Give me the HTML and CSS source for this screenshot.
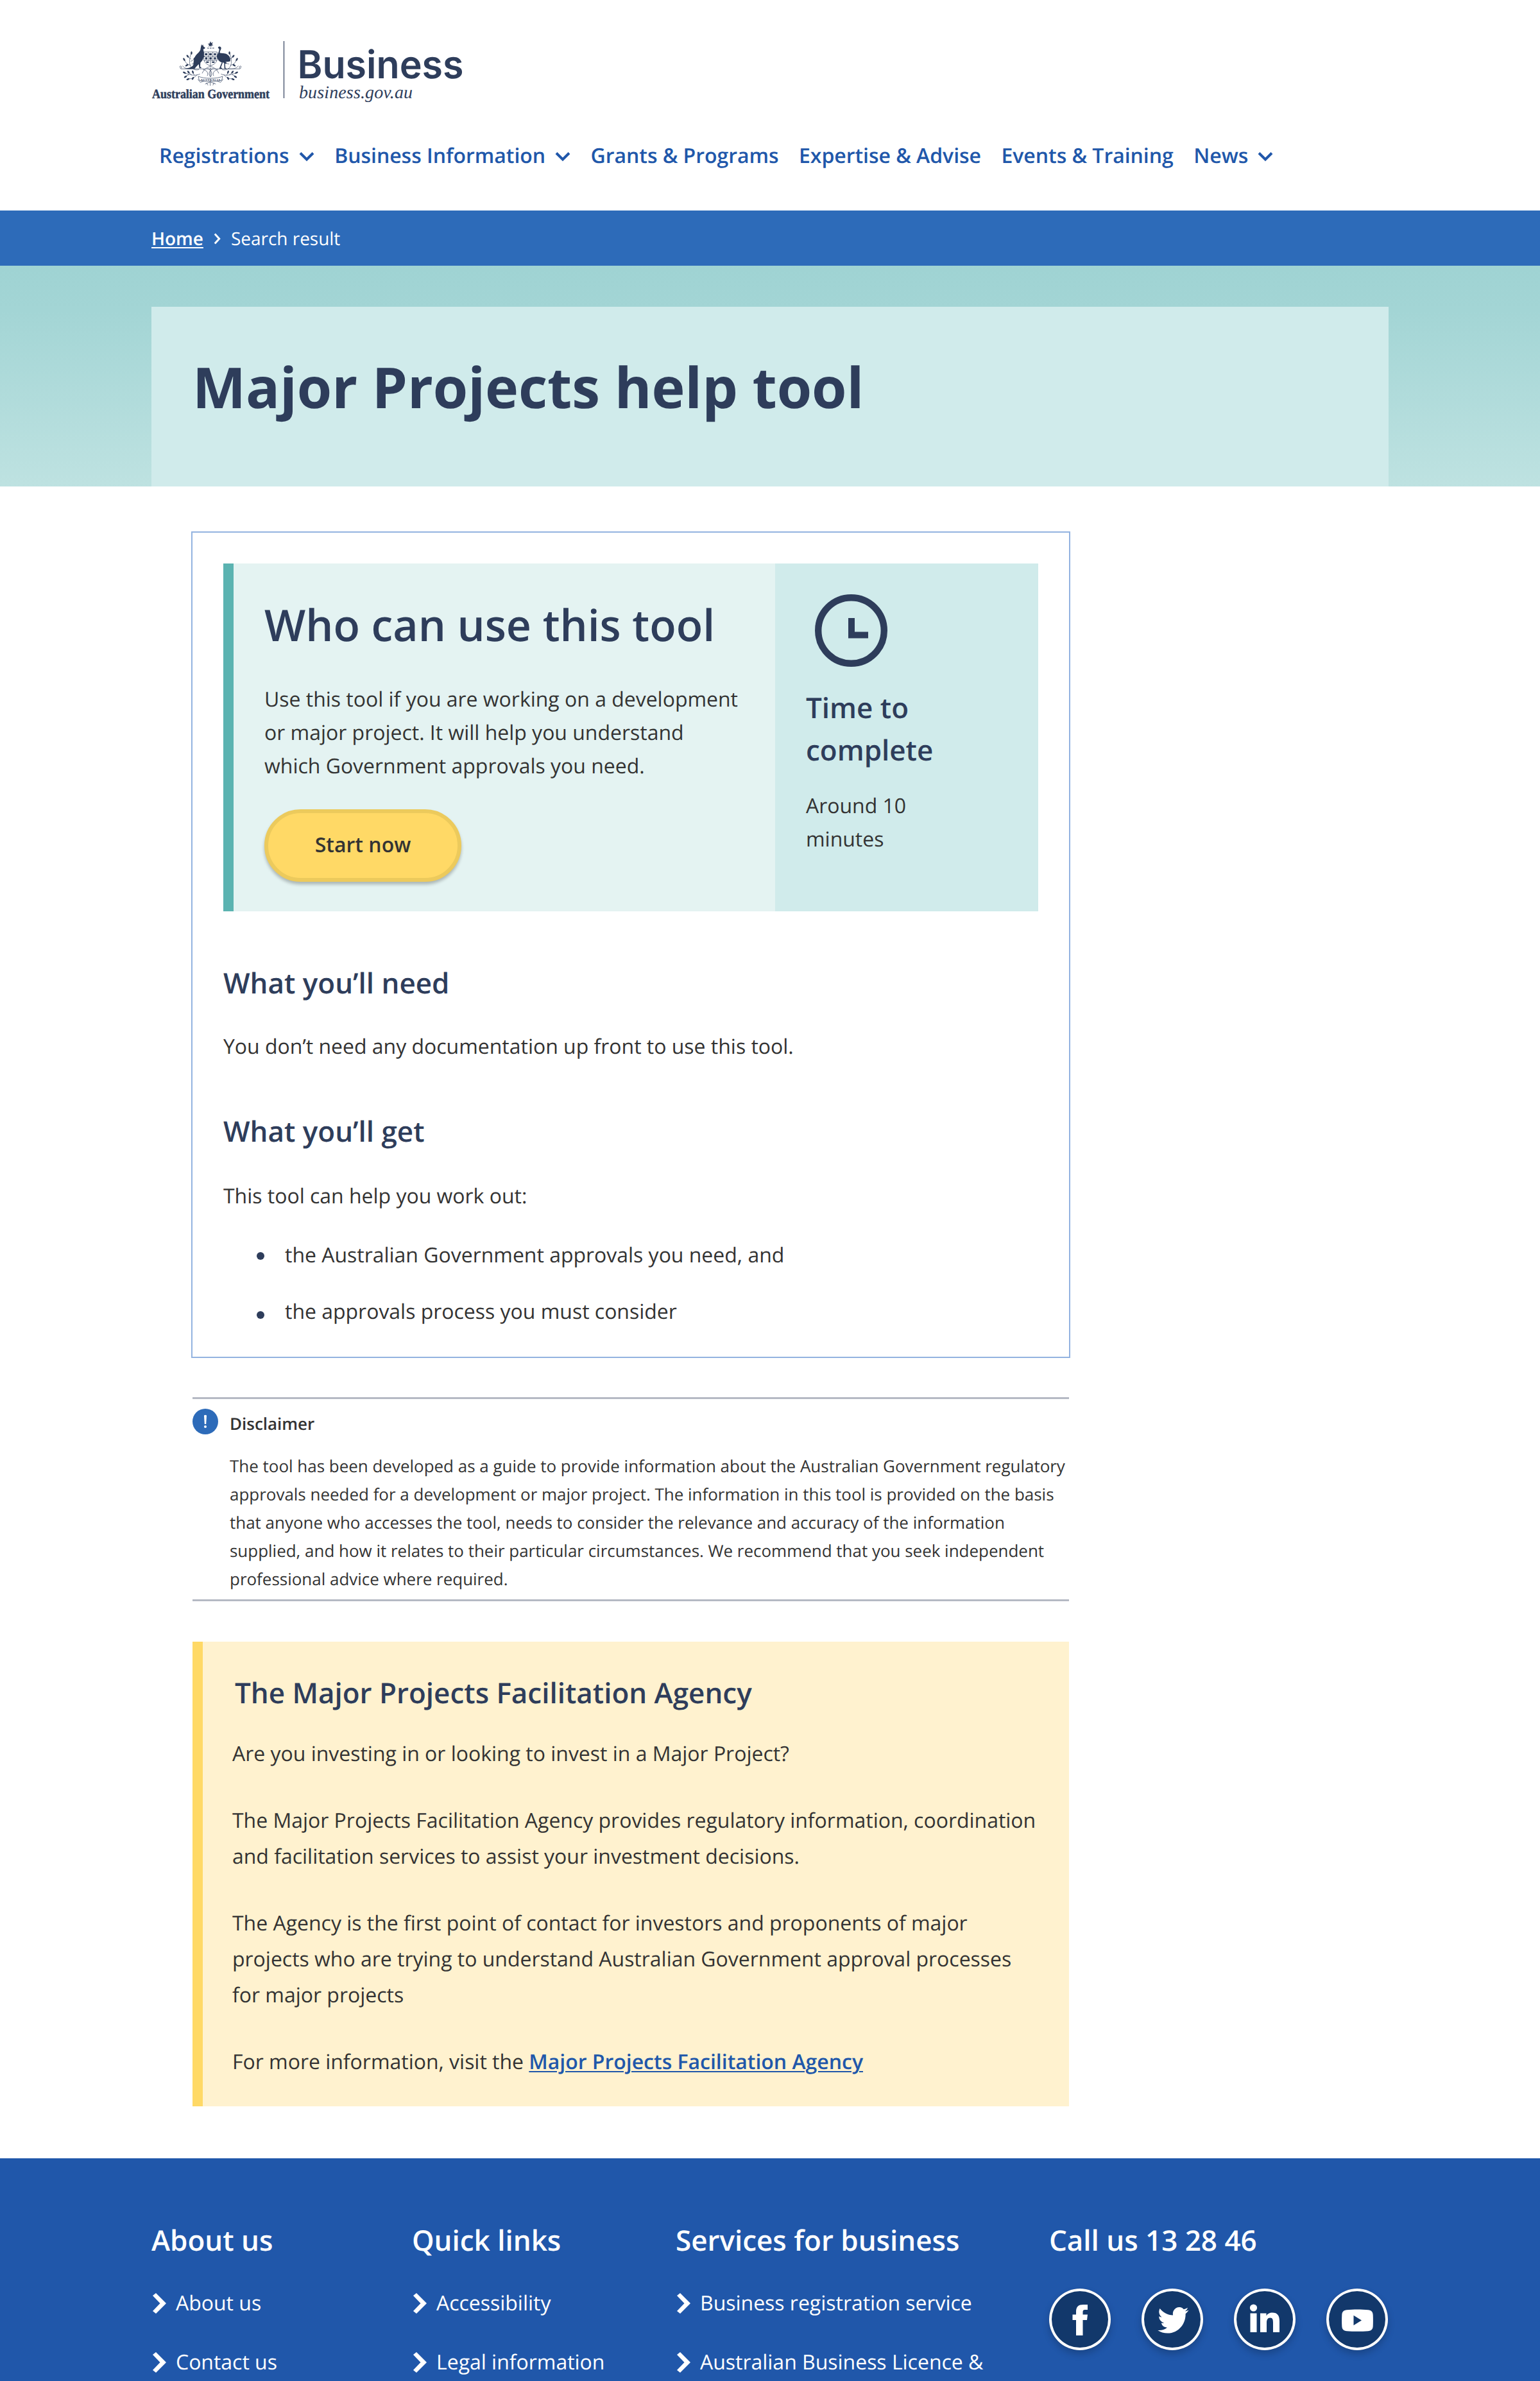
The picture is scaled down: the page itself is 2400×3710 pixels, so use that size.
FILE: index.html
```html
<!DOCTYPE html>
<html lang="en">
<head>
<meta charset="utf-8">
<title>Major Projects help tool</title>
<link rel="stylesheet" href="styles.css">
</head>
<body>
<svg width="0" height="0" class="defs" aria-hidden="true">
  <symbol id="down" viewBox="0 0 24 16"><path d="M2 2.5 12 12.5 22 2.5" fill="none" stroke="currentColor" stroke-width="4"/></symbol>
  <symbol id="right" viewBox="0 0 22 32"><path d="M0 4 5 0 21 16 5 32 0 28 11.500 16Z" fill="currentColor"/></symbol>
  <symbol id="sprig" viewBox="0 0 76 100" overflow="visible">
    <g fill="none" stroke="currentColor" stroke-width="1.500">
      <path d="M66 66C50 70 38 62 34 50S32 22 38 6M36 50C24 48 18 42 14 32M44 62C28 66 14 62 6 52M38 28 26 20M36 36 50 28M40 46 54 42"/>
      <path d="M70 82C52 90 36 86 14 78M60 84C50 96 40 100 26 100M40 86 30 78M30 84 18 90M50 87 44 78"/>
    </g>
    <g fill="currentColor">
      <ellipse cx="39" cy="5" rx="3" ry="6"/><ellipse cx="25" cy="17" rx="3" ry="6" transform="rotate(-40 25 17)"/><ellipse cx="51" cy="25" rx="3" ry="6" transform="rotate(45 51 25)"/><ellipse cx="12" cy="29" rx="3" ry="6" transform="rotate(-30 12 29)"/><ellipse cx="55" cy="41" rx="3" ry="6" transform="rotate(70 55 41)"/><ellipse cx="22" cy="50" rx="3" ry="6" transform="rotate(60 22 50)"/><ellipse cx="13" cy="77" rx="3" ry="6" transform="rotate(-60 13 77)"/><ellipse cx="28" cy="75" rx="3" ry="6" transform="rotate(-40 28 75)"/><ellipse cx="44" cy="75" rx="3" ry="6" transform="rotate(-20 44 75)"/><ellipse cx="17" cy="92" rx="3" ry="6" transform="rotate(60 17 92)"/><ellipse cx="26" cy="101" rx="3" ry="6" transform="rotate(70 26 101)"/><ellipse cx="44" cy="98" rx="3" ry="6" transform="rotate(30 44 98)"/>
    </g>
  </symbol>
</svg>

<header class="header">
  <svg class="logo" width="500" height="110" viewBox="0 0 500 110" role="img" aria-label="Australian Government, Business">
    <g transform="translate(-11 5) scale(.33333)" color="#2e3d5b">
      <path fill="currentColor" d="M309 28 312 36 321 33 316 41 322 47 314 47 312 55 308 49 300 53 303 45 296 40 304 39Z"/>
      <path stroke="currentColor" stroke-width="3" d="M294 60h8m4 0h8m4 0h8"/>
      <path fill="currentColor" d="M267 41 270 49 274 43 276 52 284 58 282 63 275 65C278 75 280 86 278 95L284 98 277 102C276 113 268 122 262 128L261 146 268 153 257 154 254 135C247 142 240 148 236 156H186C208 153 224 149 229 137 231 118 232 101 246 88 258 78 263 70 263 61Z"/>
      <path fill="currentColor" d="M344 58C346 50 358 51 359 59 360 66 352 72 353 82 362 86 375 82 388 90 399 97 403 108 402 119 392 126 385 122 377 126L379 152 386 156H374L373 129 367 126 358 150 366 156H350L362 127C350 124 341 112 339 99 340 88 350 78 350 65Z"/>
      <g fill="none" stroke="currentColor" stroke-width="2">
        <path d="M278 78H340V111C340 128 322 138 309 143 296 138 278 128 278 111ZM278 98H340M278 118H339M299 78V118M320 78V118M309 118V142"/>
        <path d="M167 150C162 142 174 141 174 150 172 157 166 157 168 150M171 157H447M451 150C456 142 444 141 444 150 446 157 452 157 450 150"/>
        <path d="M309 145C294 150 280 156 270 178M309 145C324 150 338 156 348 178M309 150V195M295 155C315 164 321 180 309 194 297 180 303 164 323 155M274 160C294 164 300 178 294 190M344 160C324 164 318 178 324 190"/>
        <path d="M252 192C280 204 338 204 366 192L362 210C338 218 280 218 256 210ZM250 206 262 220 278 214M368 206 356 220 340 214M308 218 284 228M308 218 334 228M308 214V236M290 222 298 234M326 222 320 234"/>
      </g>
      <g fill="currentColor"><path d="M283 84h11v9h-11zM303 84h12v9h-12zM325 84h10v9h-10zM284 103h10v10h-10zM304 103h11v10h-11zM325 103h10v10h-10zM289 122h12v7h-12zM316 122h12v7h-12z"/></g>
      <text x="309" y="212" font-family="Liberation Serif" font-weight="700" font-size="14" text-anchor="middle" textLength="92" fill="currentColor">AUSTRALIA</text>
      <use href="#sprig" x="170" y="76" width="98" height="128"/>
      <use href="#sprig" x="170" y="76" width="98" height="128" transform="matrix(-1 0 0 1 618 0)"/>
    </g>
    <text x="1" y="103" class="logo-gov" textLength="183" lengthAdjust="spacingAndGlyphs">Australian Government</text>
    <path d="M206.500 14V103" stroke="#2e3d5b" stroke-width="1.200"/>
    <text x="227.500" y="72" class="logo-name" textLength="259" lengthAdjust="spacingAndGlyphs">Business</text>
    <text x="230" y="103" class="logo-url" textLength="177">business.gov.au</text>
  </svg>
  <nav class="nav">
    <a>Registrations<svg class="down"><use href="#down"/></svg></a>
    <a>Business Information<svg class="down"><use href="#down"/></svg></a>
    <a>Grants &amp; Programs</a>
    <a>Expertise &amp; Advise</a>
    <a>Events &amp; Training</a>
    <a>News<svg class="down"><use href="#down"/></svg></a>
  </nav>
</header>

<div class="crumbs">
  <a class="home">Home</a>
  <svg width="11" height="18" viewBox="0 0 10 17"><path d="M1.500 1.500 8 8.500 1.500 15.500" fill="none" stroke="#fff" stroke-width="2.800"/></svg>
  <span>Search result</span>
</div>

<div class="hero"><div class="hero-box"><h1>Major Projects help tool</h1></div></div>

<main class="main">
  <section class="card">
    <div class="intro">
      <div class="who">
        <h2>Who can use this tool</h2>
        <p>Use this tool if you are working on a development<br>or major project. It will help you understand<br>which Government approvals you need.</p>
        <button class="start">Start now</button>
      </div>
      <div class="time">
        <svg class="clock" viewBox="0 0 113 113"><circle cx="56.500" cy="56.500" r="51.300" fill="none" stroke="#2e3d5b" stroke-width="10.400"/><path d="M52 37H62V58.500H83V68.500H52Z" fill="#2e3d5b"/></svg>
        <h3>Time to<br>complete</h3>
        <p>Around 10<br>minutes</p>
      </div>
    </div>
    <h3 class="need">What you’ll need</h3>
    <p class="need-text">You don’t need any documentation up front to use this tool.</p>
    <h3 class="get">What you’ll get</h3>
    <p class="get-text">This tool can help you work out:</p>
    <ul class="list">
      <li>the Australian Government approvals you need, and</li>
      <li>the approvals process you must consider</li>
    </ul>
  </section>

  <section class="disclaimer">
    <svg class="alert" viewBox="0 0 40 40"><circle cx="20" cy="20" r="20" fill="#2d6bb9"/><path d="M18 10.500Q20 9 22 10.500L21.200 24H18.800Z" fill="#fff"/><circle cx="20" cy="28" r="2" fill="#fff"/></svg>
    <div>
      <h4>Disclaimer</h4>
      <p>The tool has been developed as a guide to provide information about the Australian Government regulatory<br>approvals needed for a development or major project. The information in this tool is provided on the basis<br>that anyone who accesses the tool, needs to consider the relevance and accuracy of the information<br>supplied, and how it relates to their particular circumstances. We recommend that you seek independent<br>professional advice where required.</p>
    </div>
  </section>

  <section class="agency">
    <h3>The Major Projects Facilitation Agency</h3>
    <p>Are you investing in or looking to invest in a Major Project?</p>
    <p>The Major Projects Facilitation Agency provides regulatory information, coordination<br>and facilitation services to assist your investment decisions.</p>
    <p>The Agency is the first point of contact for investors and proponents of major<br>projects who are trying to understand Australian Government approval processes<br>for major projects</p>
    <p>For more information, visit the <a>Major Projects Facilitation Agency</a></p>
  </section>
</main>

<footer class="footer">
  <div class="col">
    <h3>About us</h3>
    <ul><li><svg class="right"><use href="#right"/></svg>About us</li><li><svg class="right"><use href="#right"/></svg>Contact us</li></ul>
  </div>
  <div class="col">
    <h3>Quick links</h3>
    <ul><li><svg class="right"><use href="#right"/></svg>Accessibility</li><li><svg class="right"><use href="#right"/></svg>Legal information</li></ul>
  </div>
  <div class="col">
    <h3>Services for business</h3>
    <ul><li><svg class="right"><use href="#right"/></svg>Business registration service</li><li><svg class="right"><use href="#right"/></svg>Australian Business Licence &amp;</li></ul>
  </div>
  <div class="col">
    <h3>Call us 13 28 46</h3>
    <div class="social">
      <a><svg viewBox="0 0 96 96"><path d="M42 73V49H36.500V40.500H42V36C42 28 46 25 53 25H60V33H56C53.500 33 52.500 34 52.500 36.500V40.500H60L59 49H52.500V73Z"/></svg></a>
      <a><svg viewBox="0 0 96 96"><path transform="translate(25.300 24.300) scale(2.010 2.080)" d="M23.953 4.570a10 10 0 01-2.825.775 4.958 4.958 0 002.163-2.723c-.951.555-2.005.959-3.127 1.184a4.920 4.920 0 00-8.384 4.482C7.690 8.095 4.067 6.130 1.640 3.162a4.822 4.822 0 00-.666 2.475c0 1.710.870 3.213 2.188 4.096a4.904 4.904 0 01-2.228-.616v.060a4.923 4.923 0 003.946 4.827 4.996 4.996 0 01-2.212.085 4.936 4.936 0 004.604 3.417 9.867 9.867 0 01-6.102 2.105c-.390 0-.779-.023-1.170-.067a13.995 13.995 0 007.557 2.209c9.053 0 13.998-7.496 13.998-13.985 0-.210 0-.420-.015-.630A9.935 9.935 0 0024 4.590z"/></svg></a>
      <a><svg viewBox="0 0 96 96"><circle cx="30.500" cy="30" r="5.600"/><path d="M25.500 38.500H35.500V68H25.500ZM41 38.500H50.500V42.500C52 39.500 55.500 37.500 60 37.500 68 37.500 71 42 71 51V68H61V53C61 49 60.500 45.500 56.500 45.500S51 49 51 53V68H41Z"/></svg></a>
      <a><svg viewBox="0 0 96 96"><path fill-rule="evenodd" d="M32 33.200C42 32.300 55 32.300 65 33.200 70 33.600 72.500 36 72.700 41 73 47 73 53 72.700 58.500 72.500 63.500 70 65.800 65 66.200 55 67 42 67 32 66.200 27 65.800 24.500 63.500 24.300 58.500 24 53 24 47 24.300 41 24.500 36 27 33.600 32 33.200ZM42.500 41.700V57.300L55 49.500Z"/></svg></a>
    </div>
  </div>
</footer>
</body>
</html>
```
FILE: styles.css
```css
* { box-sizing: border-box; margin: 0; padding: 0; }
html, body { width: 2400px; height: 3710px; overflow: hidden; }
body {
  display: flex;
  flex-direction: column;
  background: #fff;
  color: #333;
  font: 32px/52px "Open Sans", "Noto Sans", sans-serif;
  letter-spacing: -.02px;
  text-rendering: geometricPrecision;
}
ul { list-style: none; }
h2, h3 { color: #2e3d5b; font-weight: 600; }
h3 { font-size: 44px; line-height: 66px; }
.defs { position: absolute; }

/* Header */
.header { height: 328px; flex: none; padding: 50px 236px 0; }
.logo { display: block; }
.logo text { fill: #2e3d5b; }
.logo .logo-gov { font: 700 20px "Liberation Serif", serif; stroke: #2e3d5b; stroke-width: .5px; }
.logo .logo-name { font: 600 60px Inter, sans-serif; }
.logo .logo-url { font: italic 28px "Liberation Serif", serif; }
.nav { display: flex; gap: 31.5px; margin: 61px 0 0 12px; line-height: 44px; font-weight: 600; letter-spacing: -.04px; color: #2057aa; white-space: nowrap; }
.nav a { display: flex; align-items: center; }
.down { width: 24px; height: 16px; margin: 2px 0 0 15px; }

/* Breadcrumbs */
.crumbs { flex: none; height: 86px; padding: 1px 0 0 236px; display: flex; align-items: center; gap: 16px; background: #2d6bb9; color: #fff; font-size: 28px; }
.home { font-weight: 600; text-decoration: underline; text-decoration-thickness: 2px; text-underline-offset: 3px; }

/* Hero */
.hero { flex: none; height: 344px; padding: 64px 236px 0; background: linear-gradient(#9fd3d3, #a3d5d5 20%, #bee2e1); }
.hero-box { height: 280px; padding: 64px; background: #d0ebeb; }
h1 { font-size: 88px; line-height: 120px; font-weight: 700; letter-spacing: -.08px; color: #2e3d5b; }

/* Main column */
.main { flex: none; width: 1370px; margin-left: 298px; padding-top: 70px; white-space: nowrap; }
.card { height: 1288px; border: 2px solid #93b3e0; padding: 48px; }
.intro { display: flex; height: 542px; }
.who { width: 860px; padding: 51px 0 0 48px; border-left: 16px solid #5bb3b1; background: #e4f3f2; }
.who h2 { font-size: 68px; line-height: 88px; margin-bottom: 47px; }
.start {
  display: block; width: 307px; height: 113px; margin-top: 41px;
  border: 6px solid #ecca5c; border-radius: 57px; background: #ffd966;
  box-shadow: 0 4px 5px rgba(0, 0, 0, .25);
  font: 600 32px/52px "Open Sans", sans-serif; color: #333; padding: 0 0 4px;
}
.time { flex: 1; padding: 48px; background: #d0ebeb; }
.clock { display: block; width: 113px; height: 113px; margin: 0 0 30px 14px; }
.time p { margin-top: 29px; }
.need { margin-top: 78px; }
.need-text { margin-top: 41px; }
.get { margin-top: 72px; }
.get-text { margin-top: 43px; }
.list { margin: 40px 0 0 52px; display: grid; gap: 36px; }
.list li { display: flex; align-items: center; gap: 32px; }
.list li::before { content: ""; width: 12px; height: 12px; border-radius: 50%; background: #2e3d5b; margin-top: 2px; }
.list li + li::before { margin-top: 10px; }

/* Disclaimer */
.disclaimer { display: flex; gap: 18px; width: 1366px; height: 318px; margin: 61px 0 0 2px; padding-top: 15px; border: solid #b5b9c4; border-width: 3px 0; font-size: 26px; line-height: 44px; }
.alert { width: 40px; height: 40px; flex: none; }
.disclaimer h4 { font-size: 26px; line-height: 40px; font-weight: 600; margin: 3px 0 24px; }

/* Agency callout */
.agency { width: 1366px; height: 724px; margin: 63px 0 81px 2px; padding: 46px 0 0 46px; border-left: 16px solid #ffd966; background: #fff2cf; line-height: 56px; }
.agency h3 { margin: 0 0 35px 4px; }
.agency p + p { margin-top: 48px; }
.agency a { color: #2057aa; font-weight: 600; text-decoration: underline; text-decoration-thickness: 2px; text-underline-offset: 3px; }

/* Footer */
.footer { flex: none; height: 347px; padding: 94px 0 0 236px; display: grid; grid-template-columns: 406px 411px 582px 1fr; background: #2057aa; color: #fff; white-space: nowrap; overflow: hidden; }
.footer h3 { color: #fff; }
.footer ul { margin-top: 40px; display: grid; gap: 40px; }
.footer li { display: flex; align-items: center; gap: 14px; }
.right { width: 22px; height: 32px; margin-left: 2px; }
.social { display: flex; gap: 48px; margin-top: 43px; }
.social a { width: 96px; height: 96px; border-radius: 50%; background: #12386b; box-shadow: inset 0 0 0 4px #fff, 0 6px 12px rgba(0, 0, 0, .2); }
.social svg { display: block; fill: #fff; }
```
